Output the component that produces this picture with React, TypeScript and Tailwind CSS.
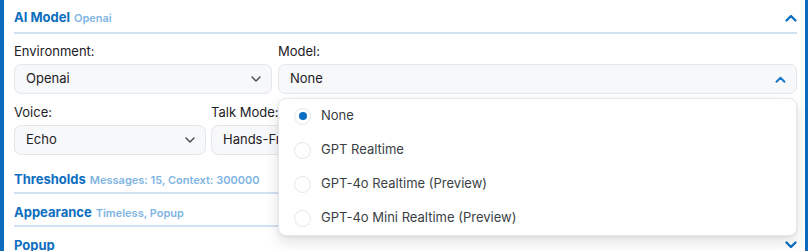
import React from "react";

const FONT = { fontFamily: "Inter, 'Noto Sans', sans-serif" };

function ChevronDown({ className = "" }: { className?: string }) {
  return (
    <svg width="10" height="6" viewBox="0 0 10 6" className={className} fill="none">
      <path d="M1 1 L5 5 L9 1" stroke="currentColor" strokeWidth="1.5" strokeLinecap="round" strokeLinejoin="round" />
    </svg>
  );
}

function ChevronUpBold({ className = "" }: { className?: string }) {
  return (
    <svg width="12" height="8" viewBox="0 0 12 8" className={className} fill="none">
      <path d="M1.5 6.5 L6 2 L10.5 6.5" stroke="currentColor" strokeWidth="2.3" strokeLinecap="round" strokeLinejoin="round" />
    </svg>
  );
}

function ChevronDownBold({ className = "" }: { className?: string }) {
  return (
    <svg width="12" height="8" viewBox="0 0 12 8" className={className} fill="none">
      <path d="M1.5 1.5 L6 6 L10.5 1.5" stroke="currentColor" strokeWidth="2.3" strokeLinecap="round" strokeLinejoin="round" />
    </svg>
  );
}

function SelectBox({ value, open = false }: { value: string; open?: boolean }) {
  return (
    <div className="flex h-[30px] items-center justify-between rounded-[7px] border border-[#e3e6ea] bg-[#f6f8fa] pl-[11px] pr-[10px] text-[13px] text-[#1d2125]">
      <span className="truncate whitespace-nowrap">{value}</span>
      {open ? (
        <ChevronUpBold className="h-[7px] w-[11px] text-[#1a78c9]" />
      ) : (
        <ChevronDown className="text-[#4a4f55]" />
      )}
    </div>
  );
}

function Field({ label, children, className = "" }: { label: string; children: React.ReactNode; className?: string }) {
  return (
    <div className={"flex flex-col " + className}>
      <div className="mb-[5px] text-[13px] leading-[16px] text-[#1d2125]">{label}</div>
      {children}
    </div>
  );
}

function SectionHeader({ title, sub, open = false }: { title: string; sub?: string; open?: boolean }) {
  return (
    <div className="flex items-center justify-between border-b-2 border-[#cfe1f2] pt-[9px] pb-[3px]">
      <div className="flex items-baseline gap-[4px] whitespace-nowrap leading-[18px]">
        <span className="text-[13px] font-bold text-[#0d6ec0]">{title}</span>
        {sub && <span className="text-[11px] font-semibold text-[#7fb5e3]">{sub}</span>}
      </div>
      {open ? (
        <ChevronUpBold className="text-[#0d6ec0]" />
      ) : (
        <ChevronDownBold className="text-[#0d6ec0]" />
      )}
    </div>
  );
}

const OPTIONS = ["None", "GPT Realtime", "GPT-4o Realtime (Preview)", "GPT-4o Mini Realtime (Preview)"];

function Dropdown() {
  return (
    <div className="absolute left-0 right-0 top-[34px] z-10 rounded-[8px] border border-[#e6e8eb] bg-white shadow-[0_6px_14px_rgba(0,0,0,0.12),0_1px_3px_rgba(0,0,0,0.06)]">
      {OPTIONS.map((o, i) => (
        <div key={o} className="flex h-[34px] items-center pl-[15px]">
          <span className="flex h-[17px] w-[17px] items-center justify-center rounded-full border border-[#e3e6ea] bg-white">
            {i === 0 && <span className="h-[8px] w-[8px] rounded-full bg-[#0b6ec4]" />}
          </span>
          <span className="ml-[10px] text-[13px] text-[#3a3f45]">{o}</span>
        </div>
      ))}
    </div>
  );
}

export default function App() {
  return (
    <div style={FONT} className="h-[251px] overflow-hidden bg-white">
      <div className="border-l-4 border-r-[3px] border-[#0b6cbf] pl-[10px] pr-[8px]">
        {/* AI Model section */}
        <div className="flex items-center justify-between border-b-2 border-[#cfe1f2] pt-[8px] pb-[5px]">
          <div className="flex items-baseline gap-[4px] leading-[18px]">
            <span className="text-[13px] font-bold text-[#0d6ec0]">AI Model</span>
            <span className="text-[11px] font-semibold text-[#7fb5e3]">Openai</span>
          </div>
          <ChevronUpBold className="text-[#0d6ec0]" />
        </div>

        <div className="pt-[9px] pb-[6px]">
          <div className="flex gap-[6px]">
            <Field label="Environment:" className="w-[258px] shrink-0">
              <SelectBox value="Openai" />
            </Field>
            <Field label="Model:" className="relative flex-1">
              <div className="relative">
                <SelectBox value="None" open />
                <Dropdown />
              </div>
            </Field>
          </div>

          <div className="mt-[10px] grid grid-cols-4 gap-[5px]">
            <Field label="Voice:">
              <SelectBox value="Echo" />
            </Field>
            <Field label="Talk Mode:">
              <SelectBox value="Hands-Free" />
            </Field>
            <Field label="Language:">
              <SelectBox value="Auto" />
            </Field>
            <Field label="Temperature:">
              <SelectBox value="0.8" />
            </Field>
          </div>
        </div>

        <SectionHeader title="Thresholds" sub="Messages: 15, Context: 300000" />
        <SectionHeader title="Appearance" sub="Timeless, Popup" />
        <SectionHeader title="Popup" />
        <SectionHeader title="Advanced" />
      </div>
    </div>
  );
}
